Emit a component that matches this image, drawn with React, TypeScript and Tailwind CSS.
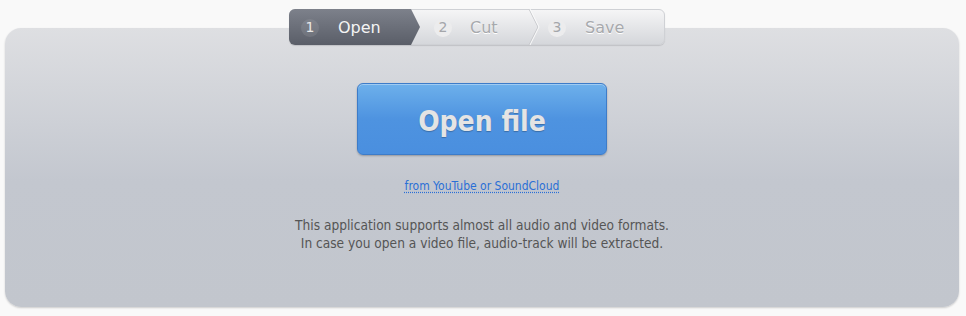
import { useState } from "react";

const steps = [
  { n: 1, label: "Open" },
  { n: 2, label: "Cut" },
  { n: 3, label: "Save" },
];

const Stepper = ({ active }: { active: number }) => {
  return (
    <div className="relative z-10 ml-[289px] flex h-[36px] w-[376px] rounded-[6px] border border-[#cfd1d5] bg-gradient-to-b from-[#f5f5f6] to-[#d5d7db] font-['DejaVu_Sans',sans-serif] shadow-[0_1px_1px_rgba(0,0,0,0.12)]">
      {/* step 1 */}
      <div
        className={`-my-px -ml-px flex w-[131px] items-center gap-[19px] rounded-l-[6px] pt-px pl-[12px] ${
          active === 1 ? "bg-gradient-to-b from-[#7d818b] to-[#5a5e68]" : ""
        }`}
        style={{ clipPath: "polygon(0 0, calc(100% - 9px) 0, 100% 50%, calc(100% - 9px) 100%, 0 100%)" }}
      >
        <span className="flex h-[18px] w-[18px] items-center justify-center rounded-full bg-[rgba(255,255,255,0.09)] text-[14px] text-[#e8e8e8]">
          1
        </span>
        <span className="text-[16px] text-[#f4f4f4]">{steps[0].label}</span>
      </div>
      {/* step 2 */}
      <div className="flex w-[108px] items-center gap-[18px] pt-px pl-[14px]">
        <span className="flex h-[18px] w-[18px] items-center justify-center rounded-full bg-[#ececed] text-[14px] text-[#a4a6aa]">
          2
        </span>
        <span className="text-[16px] text-[#a7a9ad] [text-shadow:0_1px_0_#fff]">{steps[1].label}</span>
      </div>
      <svg width="12" height="36" viewBox="0 0 12 36" className="-my-px shrink-0">
        <path d="M1 0 L10 18 L1 36" fill="none" stroke="#c4c6ca" strokeWidth="1" />
        <path d="M2 0 L11 18 L2 36" fill="none" stroke="#fafafa" strokeWidth="1" />
      </svg>
      {/* step 3 */}
      <div className="flex flex-1 items-center gap-[19px] pt-px pl-[8px]">
        <span className="flex h-[18px] w-[18px] items-center justify-center rounded-full bg-[#ececed] text-[14px] text-[#a4a6aa]">
          3
        </span>
        <span className="text-[16px] text-[#a7a9ad] [text-shadow:0_1px_0_#fff]">{steps[2].label}</span>
      </div>
    </div>
  );
};

const App = () => {
  const [active] = useState(1);

  return (
    <div className="h-[316px] w-[966px] bg-[#f9f9f9] pt-[9px]">
      <Stepper active={active} />
      <div className="mx-[5px] -mt-[17px] flex h-[279px] w-[954px] flex-col items-center rounded-[16px] bg-gradient-to-b from-[#dedfe2] via-[#c3c7cf] via-55% to-[#c2c6cd] pt-[55px] shadow-[0_1px_2px_rgba(0,0,0,0.18)]">
        <button className="flex h-[72px] w-[250px] items-center justify-center rounded-[6px] border border-[#3d7cc9] bg-gradient-to-b from-[#6db0eb] via-[#4e93e0] to-[#4a8fdf] pt-[5px] font-['DejaVu_Sans_Condensed','DejaVu_Sans',sans-serif] text-[28px] font-bold text-[#e4e4e4] shadow-[inset_0_1px_0_rgba(255,255,255,0.35),0_1px_2px_rgba(0,0,0,0.25)] [text-shadow:0_1px_1px_rgba(0,0,0,0.25)]">
          Open file
        </button>
        <a
          href="#"
          className="mt-[22px] font-['DejaVu_Sans_Condensed','DejaVu_Sans',sans-serif] text-[12px] text-[#2a6fd6] underline decoration-dotted underline-offset-2"
        >
          from YouTube or SoundCloud
        </a>
        <div className="mt-[21px] text-center font-['DejaVu_Sans_Condensed','DejaVu_Sans',sans-serif] text-[13.6px] leading-[18px] text-[#555]">
          <p>This application supports almost all audio and video formats.</p>
          <p>In case you open a video file, audio-track will be extracted.</p>
        </div>
      </div>
    </div>
  );
};

export default App;
